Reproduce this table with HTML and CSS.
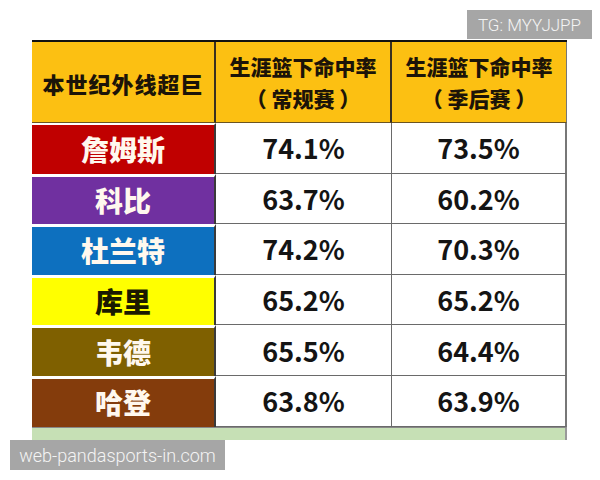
FILE: index.html
```html
<!DOCTYPE html>
<html lang="zh">
<head>
<meta charset="utf-8">
<link rel="stylesheet" href="styles.css">
</head>
<body>
<div class="page">
  <div class="table">
    <div class="hcell h1">本世纪外线超巨</div>
    <div class="hcell h2"><span>生涯篮下命中率</span><span class="sub">（ 常规赛 ）</span></div>
    <div class="hcell h3"><span>生涯篮下命中率</span><span class="sub">（ 季后赛 ）</span></div>

    <div class="name red first">詹姆斯</div>
    <div class="num">74.1%</div>
    <div class="num">73.5%</div>

    <div class="name purple">科比</div>
    <div class="num">63.7%</div>
    <div class="num">60.2%</div>

    <div class="name blue">杜兰特</div>
    <div class="num">74.2%</div>
    <div class="num">70.3%</div>

    <div class="name yellow">库里</div>
    <div class="num">65.2%</div>
    <div class="num">65.2%</div>

    <div class="name olive">韦德</div>
    <div class="num">65.5%</div>
    <div class="num">64.4%</div>

    <div class="name brown">哈登</div>
    <div class="num">63.8%</div>
    <div class="num">63.9%</div>

    <div class="green"></div>
  </div>
  <div class="tag tg">TG: MYYJJPP</div>
  <div class="tag site">web-pandasports-in.com</div>
</div>
</body>
</html>
```

FILE: styles.css
```css
html, body {
  margin: 0;
  padding: 0;
  background: #ffffff;
}
.page {
  position: relative;
  width: 600px;
  height: 480px;
  overflow: hidden;
  font-family: "Noto Sans CJK SC", "Noto Sans", sans-serif;
}
.table {
  margin: 40px 0 0 32px;
  width: 535px;
  display: grid;
  grid-template-columns: 184px 176px 175px;
  grid-template-rows: 81px repeat(6, 50.6px) 13px;
  border-top: 2px solid #111;
}
.hcell {
  background: #fcc012;
  color: #1c1408;
  font-weight: 900;
  display: flex;
  flex-direction: column;
  align-items: center;
  justify-content: center;
  border-right: 2px solid #3a3020;
  border-bottom: 1px solid #6b5420;
}
.h1 {
  font-size: 22px;
  letter-spacing: 1px;
  padding-top: 2px;
}
.h2, .h3 {
  font-size: 21px;
  line-height: 32px;
}
.sub {
  white-space: pre;
}
.h3 {
  border-right: 1px solid #777;
}
.name {
  display: flex;
  align-items: center;
  justify-content: center;
  font-size: 28px;
  font-weight: 900;
  color: #fff8ee;
  border-top: 3px solid #ffffff;
  border-right: 2px solid #3a3a3a;
  padding-bottom: 1px;
}
.name.first {
  border-top: 2px solid #ffffff;
}
.red { background: #c00000; }
.purple { background: #7030a0; }
.blue { background: #0d70bf; }
.yellow { background: #ffff00; color: #1a1a00; }
.olive { background: #7f6000; }
.brown { background: #843c0c; }
.num {
  display: flex;
  align-items: center;
  justify-content: center;
  background: #ffffff;
  color: #141414;
  font-size: 27px;
  font-weight: 700;
  border-right: 1px solid #6a6a6a;
  border-bottom: 1px solid #6a6a6a;
}
.num:nth-child(3n) {
  border-right: 2px solid #777;
}
.green {
  grid-column: 1 / 4;
  background: #c6e0b5;
  border-top: 1px solid #888;
  border-right: 2px solid #999;
}
.tag {
  position: absolute;
  background: #a6a6a6;
  color: #f4f4f4;
  font-family: Roboto, "Noto Sans", sans-serif;
  font-weight: 300;
  display: flex;
  align-items: center;
  justify-content: center;
}
.tg {
  top: 10px;
  left: 467px;
  width: 125px;
  height: 29px;
  font-size: 17px;
}
.site {
  top: 440px;
  left: 10px;
  width: 215px;
  height: 30px;
  font-size: 18px;
}
```
